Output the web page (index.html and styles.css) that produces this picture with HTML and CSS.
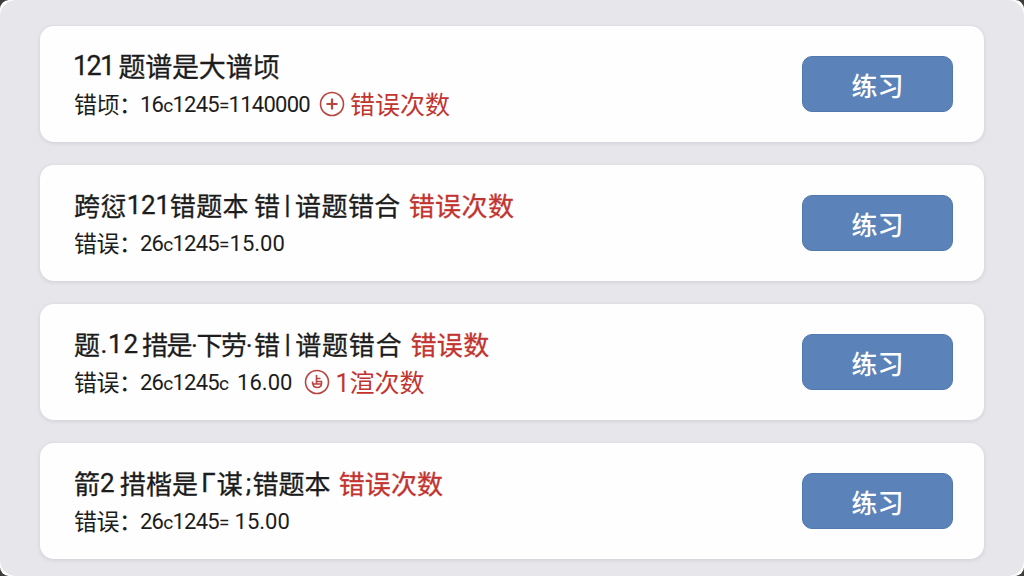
FILE: index.html
```html
<!DOCTYPE html>
<html lang="zh-CN">
<head>
    <meta charset="UTF-8">
    <meta name="viewport" content="width=device-width, initial-scale=1.0">
    <title>错题本</title>
    <link rel="stylesheet" href="styles.css">
</head>
<body>
    <div class="frame">
        <main class="list">
            <section class="card">
                <div class="info">
                    <h2 class="title wide"><span class="digits">121</span><span class="near">题谱是大谱顷</span></h2>
                    <p class="meta"><span class="label">错顷：</span><span class="num">16<i>c</i>1245<i>=</i>1140000</span>
                        <svg class="icon" viewBox="0 0 26 26"><circle cx="13" cy="13" r="11.5"/><path class="bold" d="M13 7.5v11M7.5 13h11"/></svg><span class="red">错误次数</span></p>
                </div>
                <button class="btn">练习</button>
            </section>

            <section class="card">
                <div class="info">
                    <h2 class="title loose"><span>跨愆</span><span class="digits">121</span><span>错题本</span><span class="near">错</span><span class="bar">|</span><span>谙题错合</span><span class="red">错误次数</span></h2>
                    <p class="meta"><span class="label">错误：</span><span class="num">26<i>c</i>1245<i>=</i><span class="price">15.00</span></span></p>
                </div>
                <button class="btn">练习</button>
            </section>

            <section class="card">
                <div class="info">
                    <h2 class="title loose"><span>题</span><span class="point">.12</span><span class="tight">措是·下劳·</span><span>错</span><span class="bar">|</span><span class="spread">谱题错合</span><span class="red">错误数</span></h2>
                    <p class="meta"><span class="label">错误：</span><span class="num">26<i>c</i>1245<i>c</i><span class="gap wider">16.00</span></span>
                        <svg class="icon far" viewBox="0 0 26 26"><circle cx="13" cy="13" r="11.5"/><path d="M12.5 6v9M12.5 9.500h4M8.500 12.500q0 6 4.500 6t4.500-4v-2h-5M9.500 15h8"/></svg><span class="red">1渲次数</span></p>
                </div>
                <button class="btn">练习</button>
            </section>

            <section class="card">
                <div class="info">
                    <h2 class="title"><span>箭</span><span>2</span><span class="near">措楷是</span><span class="mark">Γ</span><span>谋</span><span class="mark">;</span><span>错题本</span><span class="red">错误次数</span></h2>
                    <p class="meta"><span class="label">错误：</span><span class="num">26<i>c</i>1245<i>=</i><span class="gap">15.00</span></span></p>
                </div>
                <button class="btn">练习</button>
            </section>
        </main>
    </div>
</body>
</html>
```
FILE: styles.css
```css
html {
    background: #3c3c3c;
}
body {
    margin: 0;
    height: 576px;
    overflow: hidden;
    background: #fff;
    border-radius: 9px;
    font-family: Roboto, "Noto Sans CJK SC", sans-serif;
    color: #1c1c1c;
}
.frame {
    height: 576px;
    box-sizing: border-box;
    padding: 26px 40px 17px;
    background: #e6e6eb;
    border-radius: 16px;
}
.list {
    display: flex;
    flex-direction: column;
    gap: 23px;
}
.card {
    display: flex;
    align-items: center;
    justify-content: space-between;
    box-sizing: border-box;
    height: 116px;
    padding: 0 31px 0 34px;
    background: #fefefe;
    border-radius: 14px;
    box-shadow: 0 1px 4px rgba(60, 60, 80, 0.14);
}
.title,
.meta {
    display: flex;
    align-items: center;
    margin: 0;
    white-space: nowrap;
    font-weight: 400;
}
.title {
    height: 38px;
    font-size: 26px;
    letter-spacing: 0.1px;
    -webkit-text-stroke: 0.3px;
}
.wide {
    font-size: 27px;
    letter-spacing: -0.2px;
}
.loose {
    letter-spacing: 0.4px;
}
.loose .digits {
    letter-spacing: -0.3px;
}
.wide .digits {
    margin-left: -1px;
    letter-spacing: -1.7px;
}
.title .near {
    margin-left: 5px;
}
.title .mark {
    margin: 0 1px 0 3px;
}
.title .point {
    letter-spacing: 0.8px;
}
.title .tight {
    margin-left: 3px;
    letter-spacing: -1.4px;
}
.tight + span {
    margin-left: 3px;
}
.title .spread {
    letter-spacing: 0.8px;
}
.title .bar {
    margin: 0 4px;
}
.title .red {
    margin-left: 8px;
}
.red {
    color: #c23430;
}
.meta {
    height: 37px;
    font-size: 23px;
}
.label {
    width: 66px;
    letter-spacing: -0.5px;
}
.num {
    font-size: 22px;
    letter-spacing: -0.75px;
    padding-top: 2px;
}
.num i {
    font-size: 19px;
    font-style: normal;
}
.price {
    margin-left: 1px;
    letter-spacing: 0;
}
.gap {
    margin-left: 6px;
    letter-spacing: 0;
}
.gap.wider {
    margin-left: 9px;
}
.icon {
    width: 26px;
    height: 26px;
    margin: 1px 5px 0 9px;
    fill: none;
    stroke: #b94440;
    stroke-width: 1.6;
}
.icon.far {
    margin-left: 12px;
}
.icon .bold {
    stroke-width: 2.2;
}
.meta .red {
    font-size: 25px;
}
.btn {
    width: 151px;
    height: 56px;
    padding: 0;
    border: 1px solid #5279ad;
    border-radius: 10px;
    background: #5b83b9;
    color: #fff;
    font-family: inherit;
    font-size: 26px;
    font-weight: 500;
}
```
